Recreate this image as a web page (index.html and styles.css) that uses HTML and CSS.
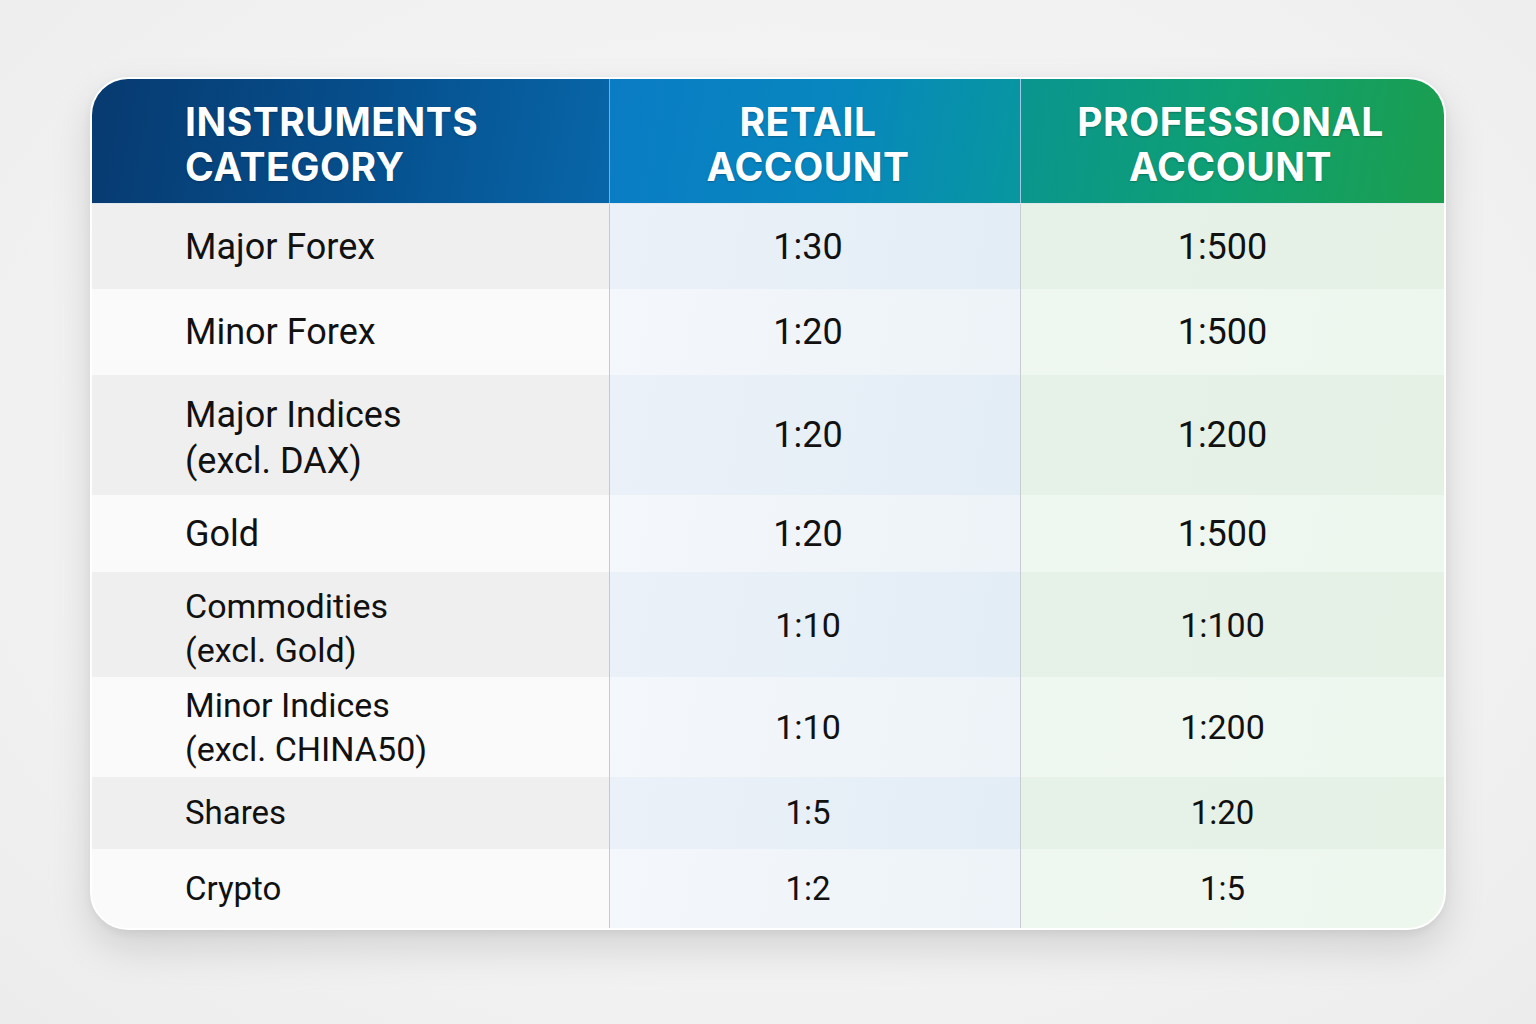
FILE: index.html
```html
<!DOCTYPE html>
<html lang="en">
<head>
<meta charset="utf-8">
<title>Leverage Table</title>
<link rel="stylesheet" href="styles.css">
</head>
<body>
<div class="page">
  <div class="card">
    <div class="table">
      <div class="row head">
        <div class="cell c1">INSTRUMENTS<br>CATEGORY</div>
        <div class="cell c2">RETAIL<br>ACCOUNT</div>
        <div class="cell c3">PROFESSIONAL<br>ACCOUNT</div>
      </div>
      <div class="row odd h85">
        <div class="cell c1">Major Forex</div>
        <div class="cell c2">1:30</div>
        <div class="cell c3">1:500</div>
      </div>
      <div class="row even h86">
        <div class="cell c1">Minor Forex</div>
        <div class="cell c2">1:20</div>
        <div class="cell c3">1:500</div>
      </div>
      <div class="row odd h120 two">
        <div class="cell c1">Major Indices<br>(excl. DAX)</div>
        <div class="cell c2">1:20</div>
        <div class="cell c3">1:200</div>
      </div>
      <div class="row even h77">
        <div class="cell c1">Gold</div>
        <div class="cell c2">1:20</div>
        <div class="cell c3">1:500</div>
      </div>
      <div class="row odd h105 sm two">
        <div class="cell c1">Commodities<br>(excl. Gold)</div>
        <div class="cell c2">1:10</div>
        <div class="cell c3">1:100</div>
      </div>
      <div class="row even h100 sm">
        <div class="cell c1">Minor Indices<br>(excl. CHINA50)</div>
        <div class="cell c2">1:10</div>
        <div class="cell c3">1:200</div>
      </div>
      <div class="row odd h72 xs">
        <div class="cell c1">Shares</div>
        <div class="cell c2">1:5</div>
        <div class="cell c3">1:20</div>
      </div>
      <div class="row even h79 xs">
        <div class="cell c1">Crypto</div>
        <div class="cell c2">1:2</div>
        <div class="cell c3">1:5</div>
      </div>
    </div>
  </div>
</div>
</body>
</html>
```

FILE: styles.css
```css
* { box-sizing: border-box; }
html, body { margin: 0; padding: 0; }
body {
  width: 1536px;
  height: 1024px;
  background: radial-gradient(ellipse at 50% 45%, #f8f8f8 0%, #f1f1f1 70%, #ececec 100%);
  font-family: Roboto, "Liberation Sans", Arial, sans-serif;
  overflow: hidden;
}
.page {
  padding: 77px 90px 0 90px;
}
.card {
  width: 1356px;
  height: 853px;
  border: 2px solid #ffffff;
  border-radius: 38px;
  background: #fafafa;
  box-shadow: 0 18px 40px rgba(0,0,0,0.13), 0 3px 10px rgba(0,0,0,0.06);
  overflow: hidden;
}
.table {
  display: flex;
  flex-direction: column;
  height: 100%;
}
.row {
  display: grid;
  grid-template-columns: 518px 411px 423px;
}
.cell {
  display: flex;
  align-items: center;
  font-size: 36px;
  line-height: 46px;
  color: #111111;
}
.row .c1 {
  padding-left: 93px;
  border-right: 1px solid #c9c9c9;
}
.row .c2 {
  justify-content: center;
  text-align: center;
  padding-right: 14px;
  border-right: 1px solid #c9cdd1;
}
.row .c3 {
  justify-content: center;
  text-align: center;
  padding-right: 20px;
}
.two .c1 { padding-top: 6px; }
.head {
  height: 125px;
  border-bottom: 1px solid #dfe6ec;
}
.head .cell {
  font-family: Inter, "Open Sans", "Liberation Sans", sans-serif;
  font-weight: 700;
  font-size: 39px;
  line-height: 45px;
  letter-spacing: 0.5px;
  color: #ffffff;
  text-shadow: 0 1px 2px rgba(0,0,0,0.25);
  padding-top: 6px;
}
.head .c1 {
  background: linear-gradient(100deg, #073a70 0%, #06508e 55%, #0866a8 100%);
  border-right: 1px solid rgba(255,255,255,0.55);
}
.head .c2 {
  background: linear-gradient(100deg, #0a7cc5 0%, #0787be 55%, #08979f 100%);
  border-right: 1px solid rgba(255,255,255,0.6);
  padding-right: 14px;
}
.head .c3 {
  background: linear-gradient(100deg, #0a958f 0%, #0fa072 50%, #1b9e4e 100%);
  padding-right: 4px;
}
.odd .c1 { background: #efefef; }
.even .c1 { background: #fafafa; }
.odd .c2 { background: linear-gradient(100deg, #ebf1f8 0%, #e3edf6 100%); }
.even .c2 { background: linear-gradient(100deg, #f4f7fb 0%, #edf3f8 100%); }
.odd .c3 { background: linear-gradient(100deg, #e6f2e8 0%, #e5f1e5 100%); }
.even .c3 { background: linear-gradient(100deg, #eff7f1 0%, #eef7ee 100%); }
.sm .cell { font-size: 34px; line-height: 44px; }
.xs .cell { font-size: 33px; }
.h85 { height: 85px; }
.h86 { height: 86px; }
.h120 { height: 120px; }
.h77 { height: 77px; }
.h105 { height: 105px; }
.h100 { height: 100px; }
.h72 { height: 72px; }
.h79 { height: 79px; }
```
